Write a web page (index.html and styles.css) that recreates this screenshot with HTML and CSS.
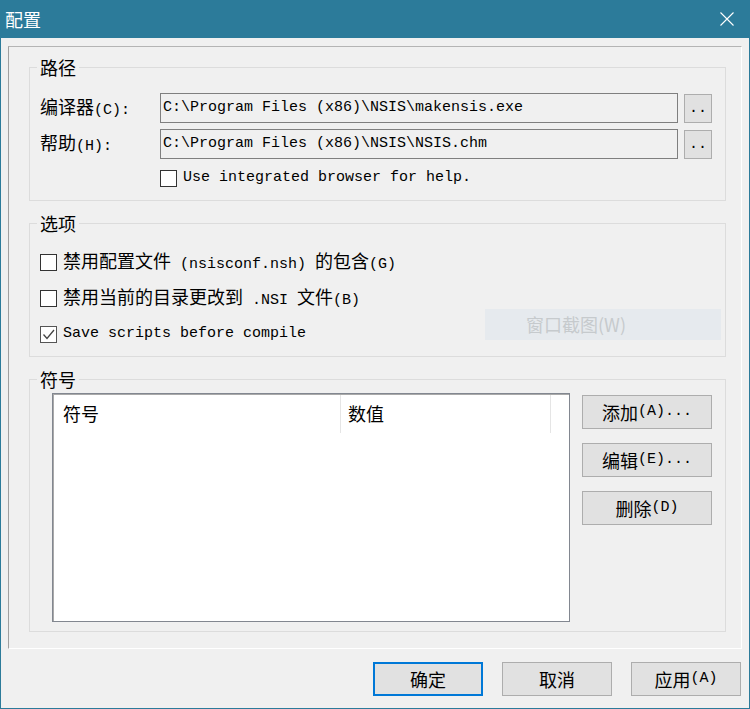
FILE: index.html
```html
<!DOCTYPE html>
<html lang="zh-CN">
<head>
<meta charset="utf-8">
<title>配置</title>
<link rel="stylesheet" href="styles.css">
</head>
<body>
<div class="window">
  <div class="titlebar">
    <span class="title">配置</span>
    <svg class="close" viewBox="0 0 14 14" width="14" height="14"><path d="M0.5 0.5 L13.5 13.5 M13.5 0.5 L0.5 13.5" stroke="#fff" stroke-width="1.1" fill="none"/></svg>
  </div>
  <div class="client">
    <div class="panel">
      <fieldset class="group g-path">
        <legend>路径</legend>
        <div class="row">
          <span class="lbl">编译器<span class="m">(C):</span></span>
          <div class="edit">C:\Program Files (x86)\NSIS\makensis.exe</div>
          <div class="browse">..</div>
        </div>
        <div class="row">
          <span class="lbl">帮助<span class="m">(H):</span></span>
          <div class="edit">C:\Program Files (x86)\NSIS\NSIS.chm</div>
          <div class="browse">..</div>
        </div>
        <div class="check-row">
          <span class="cb"></span><span class="m">Use integrated browser for help.</span>
        </div>
      </fieldset>

      <fieldset class="group g-opt">
        <legend>选项</legend>
        <div class="opt"><span class="cb"></span><span>禁用配置文件<span class="m"> (nsisconf.nsh) </span>的包含<span class="m">(G)</span></span></div>
        <div class="opt"><span class="cb"></span><span>禁用当前的目录更改到<span class="m"> .NSI </span>文件<span class="m">(B)</span></span></div>
        <div class="opt"><span class="cb checked"><svg viewBox="0 0 15 15" width="15" height="15"><path d="M2.5 7.5 L6 11.5 L13 3" stroke="#444" stroke-width="1.3" fill="none"/></svg></span><span class="m">Save scripts before compile</span>
          <div class="disabled-btn">窗口截图(W)</div>
        </div>
      </fieldset>

      <fieldset class="group g-sym">
        <legend>符号</legend>
        <div class="sym-body">
          <div class="list">
            <div class="list-head">
              <div class="col c1">符号</div>
              <div class="col c2">数值</div>
            </div>
          </div>
          <div class="side">
            <div class="btn">添加<span class="m">(A)...</span></div>
            <div class="btn">编辑<span class="m">(E)...</span></div>
            <div class="btn">删除<span class="m">(D)</span></div>
          </div>
        </div>
      </fieldset>
    </div>
    <div class="footer">
      <div class="btn default">确定</div>
      <div class="btn">取消</div>
      <div class="btn">应用<span class="m">(A)</span></div>
    </div>
  </div>
</div>
</body>
</html>
```
FILE: styles.css
```css
* { box-sizing: border-box; }
html, body { margin: 0; padding: 0; }
body {
  width: 750px;
  height: 709px;
  background: #f0f0f0;
  font-family: "Noto Sans CJK SC", sans-serif;
  font-size: 18px;
  line-height: 20px;
  color: #000;
  overflow: hidden;
}
.m {
  font-family: "Liberation Mono", "Noto Sans CJK SC", monospace;
  font-size: 15px;
  white-space: pre;
}
.window {
  width: 750px;
  height: 709px;
  display: flex;
  flex-direction: column;
}
.titlebar {
  height: 38px;
  flex: none;
  background: #2c7b9a;
  color: #fff;
  display: flex;
  align-items: center;
  justify-content: space-between;
  padding: 0 16px 0 5px;
}
.title { font-size: 18px; line-height: 20px; }
.close { display: block; }
.client {
  flex: 1;
  border: 1px solid #2c7b9a;
  border-top: none;
  display: flex;
  flex-direction: column;
}
.panel {
  margin: 8px 7px 0;
  height: 603px;
  flex: none;
  border: 1px solid;
  border-color: #b4b4b4 #ffffff #ffffff #a0a0a0;
  padding: 10px 0 0 20px;
}
fieldset.group {
  margin: 0 0 12px;
  width: 697px;
  min-width: 0;
  border: 1px solid #dcdcdc;
}
legend {
  font-size: 18px;
  line-height: 20px;
  padding: 0 3px;
  margin-left: -3px;
}
.g-path { padding: 16px 12px 11px 10px; }
.row {
  display: flex;
  align-items: center;
  height: 30px;
}
.row + .row { margin-top: 6px; }
.lbl { width: 120px; flex: none; }
.edit {
  width: 518px;
  height: 30px;
  flex: none;
  border: 1px solid #7f7f7f;
  background: #f0f0f0;
  padding-left: 2px;
  font-family: "Liberation Mono", monospace;
  font-size: 15px;
  line-height: 28px;
  white-space: pre;
}
.browse {
  width: 28px;
  height: 29px;
  flex: none;
  margin-left: 6px;
  background: #e1e1e1;
  border: 1px solid #adadad;
  font-family: "Liberation Mono", monospace;
  font-size: 15px;
  line-height: 27px;
  text-align: center;
}
.check-row {
  display: flex;
  align-items: center;
  height: 22px;
  margin-top: 8px;
  margin-left: 120px;
}
.cb {
  width: 17px;
  height: 17px;
  flex: none;
  border: 1px solid #333;
  background: #fff;
  margin-right: 6px;
  display: flex;
  align-items: center;
  justify-content: center;
}
.cb.checked { border-color: #555; }
.cb svg { display: block; }
.g-opt { padding: 11px 4px 4px 10px; }
.opt {
  display: flex;
  align-items: center;
  height: 36px;
}
.disabled-btn {
  margin-left: auto;
  align-self: flex-start;
  margin-top: -7px;
  width: 236px;
  height: 31px;
  background: #e6eaee;
  color: #c6cacd;
  padding-left: 41px;
  line-height: 31px;
  font-size: 18px;
}
.g-sym { padding: 4px 12px 9px 22px; }
.g-sym legend { margin-left: -15px; }
.sym-body {
  display: flex;
  gap: 12px;
}
.list {
  width: 518px;
  height: 229px;
  flex: none;
  background: #fff;
  border: 1px solid #828790;
  box-shadow: inset 1px 1px 0 #a9a9a9;
}
.list-head {
  display: flex;
  height: 39px;
  padding-top: 1px;
}
.col {
  border-right: 1px solid #e5e5e5;
  line-height: 37px;
}
.c1 { width: 288px; padding-left: 10px; }
.c2 { width: 210px; padding-left: 7px; }
.side {
  width: 130px;
  flex: none;
  display: flex;
  flex-direction: column;
  gap: 14px;
  margin-top: 2px;
}
.btn {
  height: 34px;
  background: #e1e1e1;
  border: 1px solid #adadad;
  display: flex;
  align-items: center;
  justify-content: center;
  line-height: 20px;
}
.footer {
  display: flex;
  justify-content: flex-end;
  gap: 19px;
  padding: 13px 8px 0 0;
}
.footer .btn { width: 110px; }
.btn.default { border: 2px solid #0078d7; }
```
